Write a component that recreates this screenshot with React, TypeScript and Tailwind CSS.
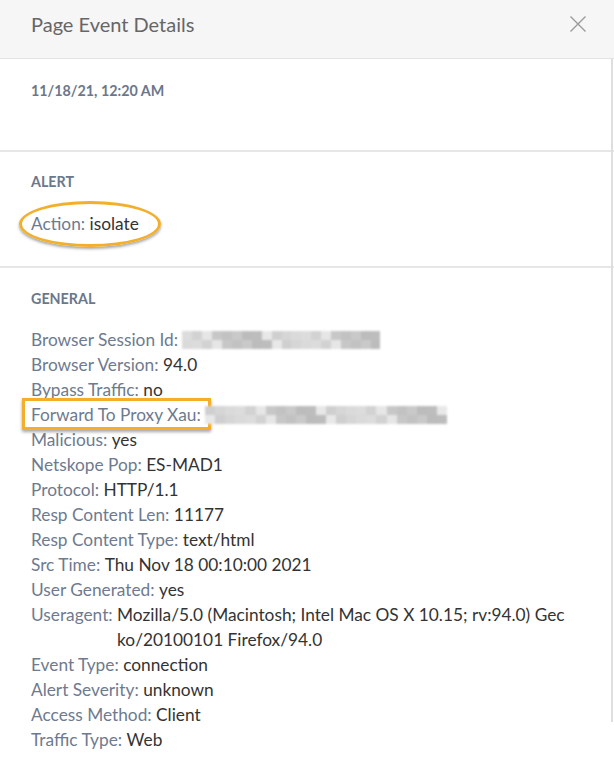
import React from "react";

const shades = ["#c9c9c9", "#dcdcdc", "#bdbdbd", "#e6e6e6", "#cfcfcf", "#c2c2c2", "#dadada", "#bcbcbc", "#d2d2d2", "#e8e8e8", "#c7c7c7", "#d6d6d6"];

function Blurred({ width, seed }: { width: number; seed: number }) {
  const count = Math.round(width / 10);
  return (
    <span className="inline-flex h-[18px] flex-col overflow-hidden blur-[1px]" style={{ width }}>
      {[0, 1].map((r) => (
        <span key={r} className="flex flex-1">
          {Array.from({ length: count }).map((_, i) => (
            <span
              key={i}
              className="h-full flex-1"
              style={{ background: shades[(i * 7 + seed + r * 5) % shades.length] }}
            />
          ))}
        </span>
      ))}
    </span>
  );
}

type Row = { label: string; value?: string; blur?: { width: number; seed: number }; boxed?: boolean };

const rows: Row[] = [
  { label: "Browser Session Id:", blur: { width: 198, seed: 1 } },
  { label: "Browser Version:", value: "94.0" },
  { label: "Bypass Traffic:", value: "no" },
  { label: "Forward To Proxy Xau:", blur: { width: 242, seed: 4 }, boxed: true },
  { label: "Malicious:", value: "yes" },
  { label: "Netskope Pop:", value: "ES-MAD1" },
  { label: "Protocol:", value: "HTTP/1.1" },
  { label: "Resp Content Len:", value: "11177" },
  { label: "Resp Content Type:", value: "text/html" },
  { label: "Src Time:", value: "Thu Nov 18 00:10:00 2021" },
  { label: "User Generated:", value: "yes" },
  { label: "Useragent:", value: "Mozilla/5.0 (Macintosh; Intel Mac OS X 10.15; rv:94.0) Gecko/20100101 Firefox/94.0" },
  { label: "Event Type:", value: "connection" },
  { label: "Alert Severity:", value: "unknown" },
  { label: "Access Method:", value: "Client" },
  { label: "Traffic Type:", value: "Web" },
];

export default function App() {
  return (
    <div className="h-[759px] w-[614px] overflow-hidden bg-white font-['Lato',sans-serif]">
      <header className="flex h-[59px] items-center justify-between border-b border-[#e3e3e3] bg-[#f6f6f6] pb-[10px] pl-[31px] pr-[28px]">
        <h1 className="text-[20px] leading-6 text-[#666666]">Page Event Details</h1>
        <svg width="16" height="16" viewBox="0 0 16 16" className="text-[#9a9a9a]">
          <path d="M0.5 0.5L15.5 15.5M15.5 0.5L0.5 15.5" stroke="currentColor" strokeWidth="1.4" fill="none" />
        </svg>
      </header>

      <div className="relative">
        <div className="absolute right-[1px] top-0 h-[663px] w-[2px] bg-[#dedede]" />

        <section className="h-[93px] border-b-2 border-[#e6e6e6] px-[31px] pt-[23px]">
          <p className="text-[14.3px] font-bold leading-[18px] text-[#6b778b]">11/18/21, 12:20 AM</p>
        </section>

        <section className="h-[116px] border-b-2 border-[#e6e6e6] px-[31px] pt-[21px]">
          <p className="text-[14.3px] font-bold leading-[18px] text-[#6b778b]">ALERT</p>
          <div className="relative mt-[20px] w-fit text-[17.3px] leading-[25px]">
            <div className="absolute -left-[12px] -top-[10px] h-[46px] w-[142px] rounded-[50%] border-[3px] border-[#f3af2c] shadow-[0_2px_3px_rgba(0,0,0,0.35)]" />
            <span className="text-[#6e7a8f]">Action:</span> <span className="text-[#333333]">isolate</span>
          </div>
        </section>

        <section className="px-[31px] pt-[22px]">
          <p className="text-[14.3px] font-bold leading-[18px] text-[#6b778b]">GENERAL</p>
          <div className="mt-[19px] flex flex-col text-[17.3px] leading-[25px]">
            {rows.map((r) => (
              <div key={r.label} className="flex">
                <span className="relative shrink-0 whitespace-pre text-[#6e7a8f]">
                  {r.boxed && (
                    <span className="absolute -left-[9px] -top-[4px] h-[32px] w-[189px] border-[3px] border-[#f3af2c] shadow-[0_2px_3px_rgba(0,0,0,0.35)]" />
                  )}
                  {r.label + " "}
                </span>
                {r.blur ? (
                  <span className="flex items-center">
                    <Blurred width={r.blur.width} seed={r.blur.seed} />
                  </span>
                ) : (
                  <span className="w-[452px] break-all text-[#333333]">{r.value}</span>
                )}
              </div>
            ))}
          </div>
        </section>
      </div>
    </div>
  );
}
